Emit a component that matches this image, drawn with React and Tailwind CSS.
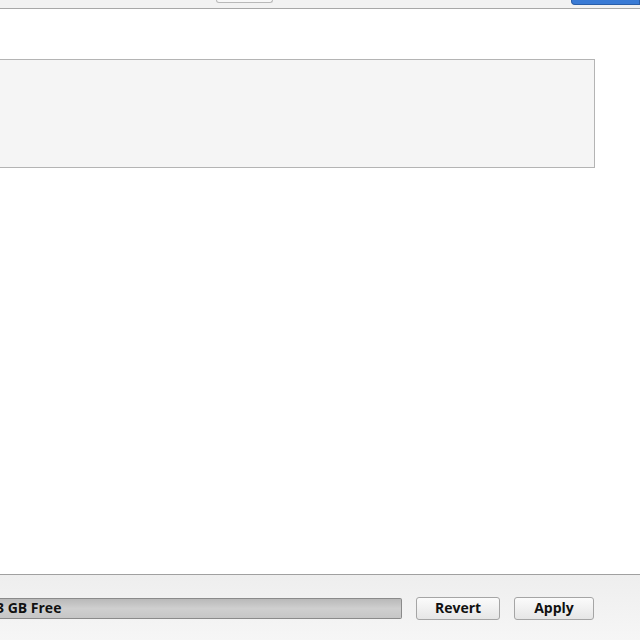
export default function App() {
  return (
    <div className="w-[640px] h-[640px] overflow-hidden flex flex-col bg-white" style={{ fontFamily: '"Open Sans", "Noto Sans", Arial, sans-serif' }}>
      <div className="h-[9px] shrink-0 bg-[#f2f2f2] border-b border-[#a8a8a8] flex items-start relative">
        <div className="ml-[216px] w-[57px] h-[3px] rounded-b-[4px] border border-t-0 border-[#b8b8b8] bg-[#f7f7f7]" />
        <div className="ml-auto w-[69px] h-[5px] rounded-bl-[4px] bg-[#3a7bd5] border border-t-0 border-[#2a5ea8]" />
      </div>
      <div className="flex-1 bg-white pt-[50px]">
        <div className="w-[595px] h-[109px] bg-[#f5f5f5] border border-l-0 border-[#b4b4b4]" />
      </div>
      <div className="h-[66px] shrink-0 border-t border-[#a0a0a0] bg-gradient-to-b from-[#eeeeee] to-[#f6f6f6] flex items-center pt-[1px]">
        <div className="w-[402px] h-[21px] ml-0 border border-l-0 border-[#8a8a8a] rounded-r-[2px] bg-gradient-to-b from-[#b9b9b9] via-[#cfcfcf] to-[#c6c6c6] flex items-center">
          <span className="ml-[-4px] text-[14px] font-bold text-[#111] leading-none">3 GB Free</span>
        </div>
        <button className="ml-[14px] w-[84px] h-[23px] border border-[#a5a5a5] rounded-[3px] bg-gradient-to-b from-[#fbfbfb] to-[#e6e6e6] text-[14px] font-bold text-[#111] leading-none">Revert</button>
        <button className="ml-[14px] w-[80px] h-[23px] border border-[#a5a5a5] rounded-[3px] bg-gradient-to-b from-[#fbfbfb] to-[#e6e6e6] text-[14px] font-bold text-[#111] leading-none">Apply</button>
      </div>
    </div>
  );
}
